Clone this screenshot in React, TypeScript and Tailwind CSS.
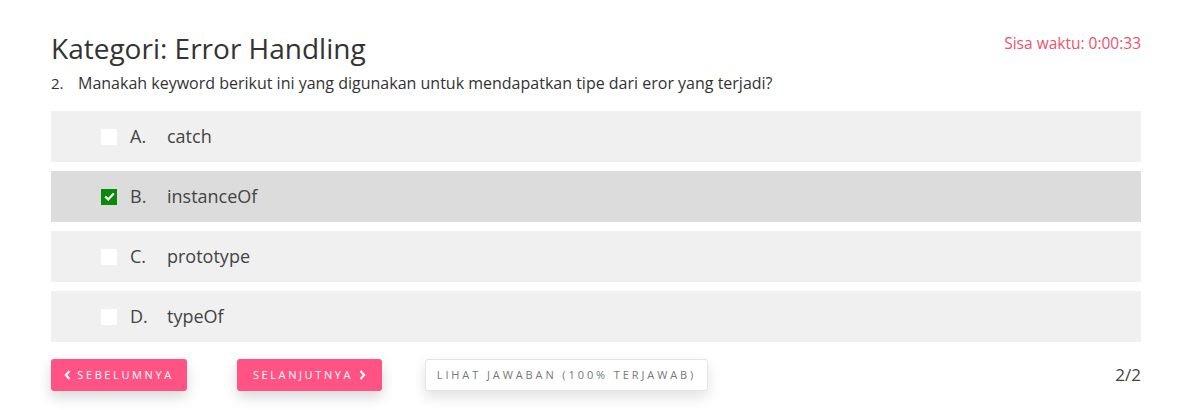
import { useState } from 'react';

const options = [
  { key: 'A', label: 'catch' },
  { key: 'B', label: 'instanceOf' },
  { key: 'C', label: 'prototype' },
  { key: 'D', label: 'typeOf' },
];

const App = () => {
  const [selected, setSelected] = useState('B');

  return (
    <div className="w-full min-h-screen bg-white text-[#444] font-['Open_Sans','Noto_Sans',sans-serif]">
      <div className="ml-[51px] mr-[48px] pt-[30px]">
        <div className="flex justify-between items-start">
          <h2 className="text-[28px] leading-[36px] text-[#333]">Kategori: Error Handling</h2>
          <span className="text-[15.5px] text-[#f0506e] mt-[2px]">Sisa waktu: 0:00:33</span>
        </div>
        <div className="flex text-[16px] leading-[22px] mt-[6px] text-[#333]">
          <span className="w-[27px] text-[15px]">2.</span>
          <span>Manakah keyword berikut ini yang digunakan untuk mendapatkan tipe dari eror yang terjadi?</span>
        </div>

        <div className="flex flex-col gap-[9px] mt-[17px]">
          {options.map(opt => (
            <label
              key={opt.key}
              onClick={() => setSelected(opt.key)}
              className={`flex items-center h-[51px] pl-[50px] cursor-pointer text-[18px] text-[#444] ${selected === opt.key ? 'bg-[#dcdcdc]' : 'bg-[#f0f0f0]'}`}
            >
              {selected === opt.key ? (
                <span className="w-4 h-4 bg-[#0a8a0a] flex items-center justify-center">
                  <svg width="11" height="9" viewBox="0 0 11 9">
                    <path d="M1.2 4.6 L4.2 7.4 L9.8 1.4" stroke="white" strokeWidth="2.2" fill="none" />
                  </svg>
                </span>
              ) : (
                <span className="w-4 h-4 bg-white"></span>
              )}
              <span className="ml-[13px] w-[37px]">{opt.key}.</span>
              <span>{opt.label}</span>
            </label>
          ))}
        </div>

        <div className="flex items-center mt-[17px]">
          <button className="flex items-center gap-[6px] h-[32px] w-[136px] justify-center rounded-[3px] bg-[#ff5385] text-white text-[11px] tracking-[2.6px] shadow-[0_6px_14px_rgba(0,0,0,0.16)]">
            <svg width="7" height="10" viewBox="0 0 7 10">
              <path d="M5.5 1 L1.8 5 L5.5 9" stroke="white" strokeWidth="2" fill="none" />
            </svg>
            SEBELUMNYA
          </button>
          <button className="ml-[50px] flex items-center gap-[6px] h-[32px] w-[145px] justify-center rounded-[3px] bg-[#ff5385] text-white text-[11px] tracking-[2.6px] shadow-[0_6px_14px_rgba(0,0,0,0.16)]">
            SELANJUTNYA
            <svg width="7" height="10" viewBox="0 0 7 10">
              <path d="M1.5 1 L5.2 5 L1.5 9" stroke="white" strokeWidth="2" fill="none" />
            </svg>
          </button>
          <button className="ml-[43px] h-[32px] w-[283px] rounded-[3px] bg-white border border-[#e5e5e5] text-[#777] text-[11px] tracking-[2.9px] shadow-[0_6px_14px_rgba(0,0,0,0.12)]">
            LIHAT JAWABAN (100% TERJAWAB)
          </button>
          <span className="ml-auto text-[17px] text-[#444]">2/2</span>
        </div>
      </div>
    </div>
  );
};

export default App;
